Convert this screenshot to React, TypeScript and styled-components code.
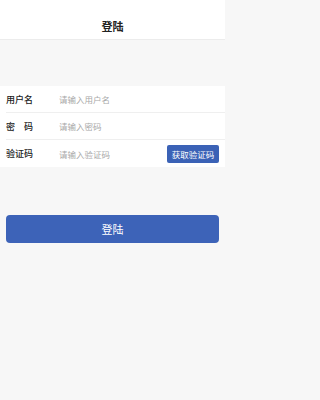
import React from "react";
import styled, { createGlobalStyle } from "styled-components";

const Global = createGlobalStyle`
  html, body { margin: 0; padding: 0; background: #f7f7f7; }
  body { font-family: "Noto Sans CJK SC", "Noto Sans", sans-serif; }
  * { box-sizing: border-box; }
`;

const Page = styled.div`
  width: 225px;
  min-height: 400px;
  background: #f7f7f7;
  display: flex;
  flex-direction: column;
`;

const Header = styled.div`
  height: 40px;
  background: #fff;
  border-bottom: 1px solid #ececec;
  display: flex;
  align-items: center;
  justify-content: center;
  padding-top: 12px;
  font-size: 11px;
  font-weight: 600;
  color: #222;
`;

const Form = styled.div`
  margin-top: 46px;
  background: #fff;
  display: flex;
  flex-direction: column;
  padding-left: 6px;
`;

const Row = styled.div<{ $last?: boolean }>`
  height: 27px;
  display: flex;
  align-items: center;
  padding-right: 6px;
  border-bottom: ${(p) => (p.$last ? "none" : "1px solid #efefef")};
`;

const Label = styled.div`
  width: 53px;
  font-size: 9px;
  font-weight: 500;
  color: #222;
  white-space: pre;
`;

const Input = styled.input`
  flex: 1;
  min-width: 0;
  border: none;
  outline: none;
  padding: 0;
  background: transparent;
  font-family: inherit;
  font-size: 8.5px;
  color: #333;
  &::placeholder { color: #a9a9a9; }
`;

const CodeButton = styled.button`
  height: 18px;
  width: 52px;
  border: none;
  border-radius: 2px;
  background: #3b62b6;
  color: #fff;
  font-family: inherit;
  font-size: 8.5px;
  padding: 0;
`;

const Submit = styled.button`
  margin: 48px 6px 0;
  height: 28px;
  border: none;
  border-radius: 4px;
  background: #3d63b8;
  color: #fff;
  font-family: inherit;
  font-size: 11px;
`;

export default function App() {
  return (
    <Page>
      <Global />
      <Header>登陆</Header>
      <Form>
        <Row>
          <Label>用户名</Label>
          <Input placeholder="请输入用户名" />
        </Row>
        <Row>
          <Label>{"密\u3000码"}</Label>
          <Input type="password" placeholder="请输入密码" />
        </Row>
        <Row $last>
          <Label>验证码</Label>
          <Input placeholder="请输入验证码" />
          <CodeButton>获取验证码</CodeButton>
        </Row>
      </Form>
      <Submit>登陆</Submit>
    </Page>
  );
}
